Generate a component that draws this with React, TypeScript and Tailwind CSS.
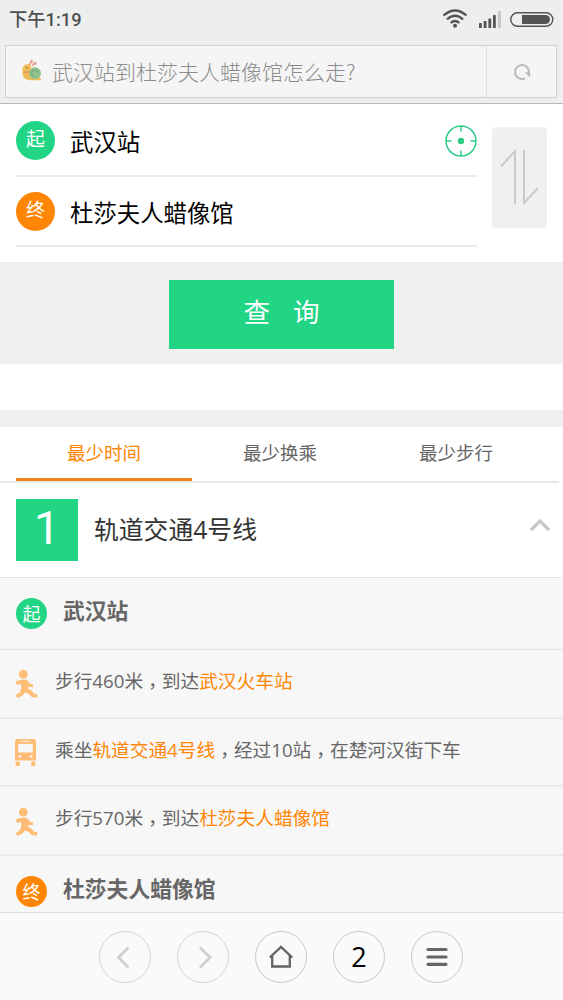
import React from 'react'

const WalkIcon = () => (
  <svg width="24" height="30" viewBox="0 0 24 30" fill="#ffbd75" stroke="#ffbd75" strokeWidth="1" strokeLinejoin="round">
    <circle cx="8.300" cy="5.200" r="3.900" />
    <path d="M1.500 12.500L7.500 11H11L13 12.500L14.200 15L17.600 15.800V17.800L13 17.300L12.400 19.500L17 22.500L18.500 25L22 25.800L21.500 28.200L16.500 27.500L14 24.500L9.800 22.800L7.500 26L2.500 28.500L1.200 26.200L5.200 23.800L6.800 19V14.600L2 15.200Z" />
  </svg>
)

const BusIcon = () => (
  <svg width="22" height="28" viewBox="0 0 22 28" className="-mt-px">
    <path
      fillRule="evenodd"
      fill="#ffbd75"
      d="M2.500 0h16q2.500 0 2.500 2.500V21.500H0V2.500Q0 0 2.500 0zM5.500 1.800v1h10V1.800zM3.200 5v8.500h14.600V5zM4.800 16a1.400 1.400 0 1 0 .01 0zM16.200 16a1.400 1.400 0 1 0 .01 0z"
    />
    <path fill="#ffbd75" d="M.6 22.500h4.200V27H.6zM16.200 22.500h4.200V27h-4.200z" />
  </svg>
)

const TargetIcon = () => (
  <svg width="32" height="32" viewBox="0 0 32 32" fill="none" stroke="#2fcb87" strokeWidth="1.5">
    <circle cx="16" cy="16" r="15" />
    <circle cx="16" cy="16" r="3.200" fill="#2fcb87" stroke="none" />
    <path d="M16 1v5.500M16 25.500V31M1 16h5.500M25.500 16H31" />
  </svg>
)

const SnailIcon = () => (
  <svg width="20" height="21" viewBox="0 0 20 21" fill="none" className="mb-[3px]">
    <path d="M7.500 5.500L9 1.500M10 6L12.500 3.500" stroke="#e3a08c" strokeWidth="1.600" />
    <circle cx="9.500" cy="1.600" r="1.600" fill="#e3a08c" />
    <circle cx="13" cy="3.400" r="1.600" fill="#e3a08c" />
    <path d="M4 4.500C1 5.500-.3 8.500.6 11.500C-.5 16.500 3 20 8 20.300H18.500C20 19 18 17 16 17L9.500 10C10 6 7.500 3.500 4 4.500Z" fill="#f0bd58" />
    <circle cx="13" cy="13.300" r="6" fill="#93c28c" />
    <path d="M13 16.500A3.200 3.200 0 1 1 16 12.500" stroke="#74b083" strokeWidth="1.400" />
    <circle cx="5" cy="7.800" r="1" fill="#b98a4a" />
    <path d="M2.500 11.500q2 2.200 4.200 0" stroke="#e58a52" strokeWidth="1.400" />
  </svg>
)

const StatusIcons = () => (
  <svg width="112" height="22" viewBox="0 0 112 22" fill="none" className="relative -left-px -top-px">
    <g stroke="#535555" strokeWidth="2.300">
      <path d="M1.500 7.500Q13 -2.500 24.500 7.500" />
      <path d="M5 11.500Q13 4 21 11.500" />
      <path d="M8.700 15Q13 11 17.300 15" />
    </g>
    <circle cx="13" cy="17.800" r="2" fill="#535555" />
    <g fill="#535555">
      <rect x="37" y="15" width="2.800" height="5" rx=".6" />
      <rect x="41.700" y="13" width="2.800" height="7" rx=".6" />
      <rect x="46.400" y="10.500" width="2.800" height="9.500" rx=".6" />
      <rect x="51" y="7" width="2.800" height="13" rx=".6" />
    </g>
    <rect x="56" y="3" width="2.800" height="17" rx=".6" fill="#c3c5c4" />
    <rect x="68.800" y="4.800" width="42" height="13.500" rx="6.700" stroke="#535555" strokeWidth="1.400" />
    <path d="M80 7h23.500a4.500 4.500 0 0 1 0 9H80z" fill="#535555" />
  </svg>
)

const steps = [
  { icon: 'walk', before: '步行460米', mid: '到达', place: '武汉火车站' },
  { icon: 'bus' },
  { icon: 'walk', before: '步行570米', mid: '到达', place: '杜莎夫人蜡像馆' },
]

const Comma = () => <span className="relative top-[5px] font-['Noto_Sans_CJK_TC',sans-serif] leading-none">，</span>

const App = () => {
  return (
    <div className="flex h-[1000px] w-[563px] flex-col overflow-hidden bg-white font-['Open_Sans','Noto_Sans_CJK_SC',sans-serif]">
      {/* Status bar and address */}
      <header className="h-[104px] shrink-0 border-b border-[#b9bbba] bg-[#edefee]">
        <div className="flex h-[45px] items-start justify-between pl-[9px] pr-[8px] pt-[9px]">
          <span className="font-['Roboto','Noto_Sans_CJK_SC',sans-serif] text-[18.3px] font-medium leading-[22px] text-[#4d4f4f]">
            下午1:19
          </span>
          <StatusIcons />
        </div>
        <div className="ml-[5px] flex h-[53px] w-[552px] border border-[#cdd2d0] bg-[#f5f5f5]">
          <div className="flex flex-1 items-center pl-[16px]">
            <SnailIcon />
            <span className="ml-[10px] whitespace-nowrap pb-[2px] font-['Noto_Sans_CJK_SC',sans-serif] text-[21px] font-light leading-[30px] text-[#8c8c8c]">
              武汉站到杜莎夫人蜡像馆怎么走?
            </span>
          </div>
          <div className="flex w-[70px] items-center justify-center border-l border-[#e2e4e3]">
            <svg width="18" height="18" viewBox="0 0 18 18" fill="none">
              <path d="M12 15.300A7 7 0 1 1 15.900 10" stroke="#bcbcbc" strokeWidth="2.200" />
              <path d="M11.500 9.300H17.200V14.500z" fill="#bcbcbc" />
            </svg>
          </div>
        </div>
      </header>

      {/* Start and end */}
      <section className="flex h-[158px] shrink-0 pl-[16px]">
        <div className="w-[461px]">
          <div className="flex h-[73px] items-center border-b-2 border-[#ebebeb] pt-[2px]">
            <span className="flex size-[39px] items-center justify-center rounded-full bg-[#21d585] pb-[2px] text-[19px] leading-none text-white">
              起
            </span>
            <span className="ml-[15px] flex-1 pt-[3px] text-[23.4px] leading-[34px] text-black">武汉站</span>
            <TargetIcon />
          </div>
          <div className="flex h-[70px] items-center border-b-2 border-[#ebebeb]">
            <span className="flex size-[39px] items-center justify-center rounded-full bg-[#ff8604] pb-[2px] text-[19px] leading-none text-white">
              终
            </span>
            <span className="ml-[15px] pt-[3px] text-[23.4px] leading-[34px] text-black">杜莎夫人蜡像馆</span>
          </div>
        </div>
        <div className="ml-[15px] mt-[23px] flex h-[101px] w-[55px] items-center justify-center rounded bg-[#f0f0f0]">
          <svg width="40" height="56" viewBox="0 0 40 56" fill="none" stroke="#cacaca" strokeWidth="2" className="mb-[2px]">
            <path d="M1 17.500L15 2V55M24 1V54L38 39" />
          </svg>
        </div>
      </section>

      <section className="flex h-[102px] shrink-0 justify-center border-t border-[#e8e8e8] bg-[#f0f0f0] pt-[17px]">
        <button className="flex h-[69px] w-[225px] items-center justify-center gap-[23px] bg-[#21d585] pb-[5px] text-[26.5px] leading-[38px] text-white">
          <span>查</span>
          <span>询</span>
        </button>
      </section>

      <div className="mt-[46px] h-[17px] shrink-0 bg-[#f0f0f0]" />

      {/* Tabs */}
      <nav className="mr-[4px] flex h-[56px] shrink-0 border-b-2 border-[#e8e8e8] pl-[16px] text-[18.5px] text-[#666]">
        <div className="h-[54px] w-[176px] border-b-[3px] border-[#ee831c] text-center leading-[51px] text-[#ff8604]">
          最少时间
        </div>
        <div className="w-[176px] text-center leading-[51px]">最少换乘</div>
        <div className="w-[176px] text-center leading-[51px]">最少步行</div>
      </nav>

      {/* Route */}
      <section className="flex h-[94px] shrink-0 items-center pl-[16px] pr-[12px]">
        <div className="size-[62px] bg-[#21d585] text-center font-['Roboto',sans-serif] text-[46px] leading-[58px] text-white">
          1
        </div>
        <h2 className="ml-4 flex-1 pb-[2px] text-[24.8px] leading-[36px] text-[#333]">轨道交通4号线</h2>
        <svg width="22" height="16" viewBox="0 0 22 16" fill="none" stroke="#c8c8c8" strokeWidth="3.200" className="mb-[10px]">
          <path d="M2 13L11 4L20 13" />
        </svg>
      </section>

      <section className="h-[335px] shrink-0 overflow-hidden bg-[#f7f7f7] text-[#666]">
        <div className="flex h-[73px] items-center border-y border-[#e4e4e4] pl-[16px]">
          <span className="flex size-[31px] items-center justify-center rounded-full bg-[#21d585] text-[18px] leading-none text-white">
            起
          </span>
          <span className="ml-[16px] pb-[5px] text-[21.8px] font-bold leading-[32px]">武汉站</span>
        </div>
        {steps.map((step, i) => (
          <div key={i} className="flex h-[68.7px] items-center border-b-2 border-[#eaeaea] pl-[15px] text-[18.7px] leading-[28px]">
            <span className="w-[40px] pt-[2px]">{step.icon === 'bus' ? <BusIcon /> : <WalkIcon />}</span>
            {step.icon === 'bus' ? (
              <p className="whitespace-nowrap pb-[5px]">
                乘坐<span className="text-[#ff8604]">轨道交通4号线</span>
                <Comma />
                经过10站
                <Comma />
                在楚河汉街下车
              </p>
            ) : (
              <p className="whitespace-nowrap pb-[5px]">
                {step.before}
                <Comma />
                {step.mid}
                <span className="text-[#ff8604]">{step.place}</span>
              </p>
            )}
          </div>
        ))}
        <div className="flex h-[71px] items-center pl-[16px]">
          <span className="flex size-[31px] items-center justify-center rounded-full bg-[#ff8604] text-[18px] leading-none text-white">
            终
          </span>
          <span className="ml-[16px] pb-[5px] text-[21.8px] font-bold leading-[32px]">杜莎夫人蜡像馆</span>
        </div>
      </section>

      {/* Browser toolbar */}
      <footer className="flex h-[88px] shrink-0 items-center justify-center gap-[26px] border-t border-[#e0e0e0] bg-[#fafafa] pr-[2px]">
        <button className="flex size-[52px] items-center justify-center rounded-full border border-[#d4d4d4]">
          <svg width="24" height="24" viewBox="0 0 24 24" fill="none" stroke="#d0d0d0" strokeWidth="3">
            <path d="M15.500 2.500L5.500 12.500L15.500 22.500" />
          </svg>
        </button>
        <button className="flex size-[52px] items-center justify-center rounded-full border border-[#d4d4d4]">
          <svg width="24" height="24" viewBox="0 0 24 24" fill="none" stroke="#d0d0d0" strokeWidth="3">
            <path d="M9 2.500L19 12.500L9 22.500" />
          </svg>
        </button>
        <button className="flex size-[52px] items-center justify-center rounded-full border border-[#c8c8c8]">
          <svg width="26" height="26" viewBox="0 0 26 26" fill="none" stroke="#636363" strokeWidth="2.300">
            <path d="M1.800 13.500L13 2.800L24.200 13.500M4.200 11.500V22.500H21.800V11.500" />
          </svg>
        </button>
        <button className="flex size-[52px] items-center justify-center rounded-full border border-[#c8c8c8] pl-px text-[27px] leading-none text-black">
          2
        </button>
        <button className="flex size-[52px] items-center justify-center rounded-full border border-[#c8c8c8]">
          <svg width="22" height="20" viewBox="0 0 22 20" stroke="#666" strokeWidth="3.200" strokeLinecap="round">
            <path d="M2 2.500H20M2 10H20M2 17.300H20" />
          </svg>
        </button>
      </footer>
    </div>
  )
}

export default App
